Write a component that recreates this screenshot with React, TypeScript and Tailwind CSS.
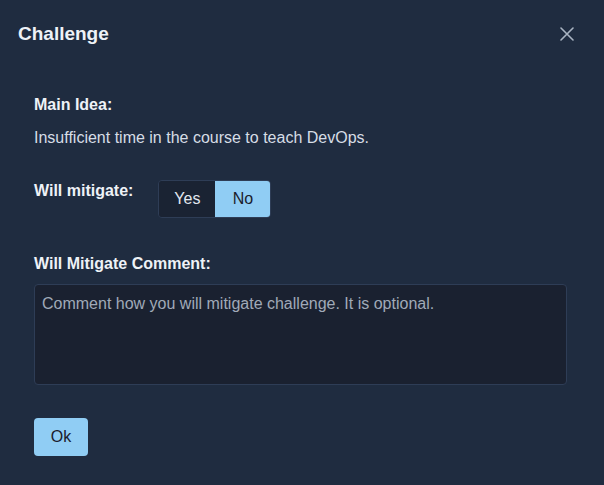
import React from "react";

export default function App() {
  return (
    <div
      className="w-[604px] h-[485px] bg-[#1f2c40] text-[#e2e8f0] overflow-hidden"
      style={{ fontFamily: '"Liberation Sans", Arial, sans-serif' }}
    >
      <div className="flex items-center justify-between pl-[18px] pr-[30px] pt-[21px] h-[46px]">
        <h2 className="text-[19px] font-bold text-[#eef2f7] leading-[24px]">Challenge</h2>
        <svg width="14" height="14" viewBox="0 0 14 14" className="text-[#a9b4c2]">
          <path d="M1 1L13 13M13 1L1 13" stroke="currentColor" strokeWidth="1.6" strokeLinecap="round" />
        </svg>
      </div>
      <div className="px-[34px] pt-[49px] flex flex-col">
        <div className="text-[16px] font-bold leading-[20px] text-[#eef2f7]">Main Idea:</div>
        <div className="mt-[12px] text-[16px] leading-[22px] text-[#d6dde6]">
          Insufficient time in the course to teach DevOps.
        </div>
        <div className="mt-[31px] flex items-start gap-[25px]">
          <div className="text-[16px] font-bold leading-[20px] pt-[1px] text-[#eef2f7]">Will mitigate:</div>
          <div className="flex h-[38px] rounded-[4px] border border-[#2e3d56] overflow-hidden">
            <div className="w-[56px] flex items-center justify-center bg-[#1a2333] text-[16px] text-[#e2e8f0]">
              Yes
            </div>
            <div className="w-[55px] flex items-center justify-center bg-[#90cdf4] text-[16px] text-[#1a202c]">
              No
            </div>
          </div>
        </div>
        <div className="mt-[36px] text-[16px] font-bold leading-[20px] text-[#eef2f7]">Will Mitigate Comment:</div>
        <textarea
          className="mt-[10px] h-[101px] w-[533px] resize-none rounded-[4px] border border-[#2e3d56] bg-[#1a2130] px-[7px] py-[8px] text-[16px] leading-[22px] text-[#e2e8f0] placeholder:text-[#a0aab8] outline-none"
          style={{ fontFamily: '"Liberation Sans", Arial, sans-serif' }}
          placeholder="Comment how you will mitigate challenge. It is optional."
        />
        <div className="mt-[33px]">
          <button className="w-[54px] h-[38px] rounded-[4px] bg-[#90cdf4] text-[16px] text-[#1a202c]">Ok</button>
        </div>
      </div>
    </div>
  );
}
